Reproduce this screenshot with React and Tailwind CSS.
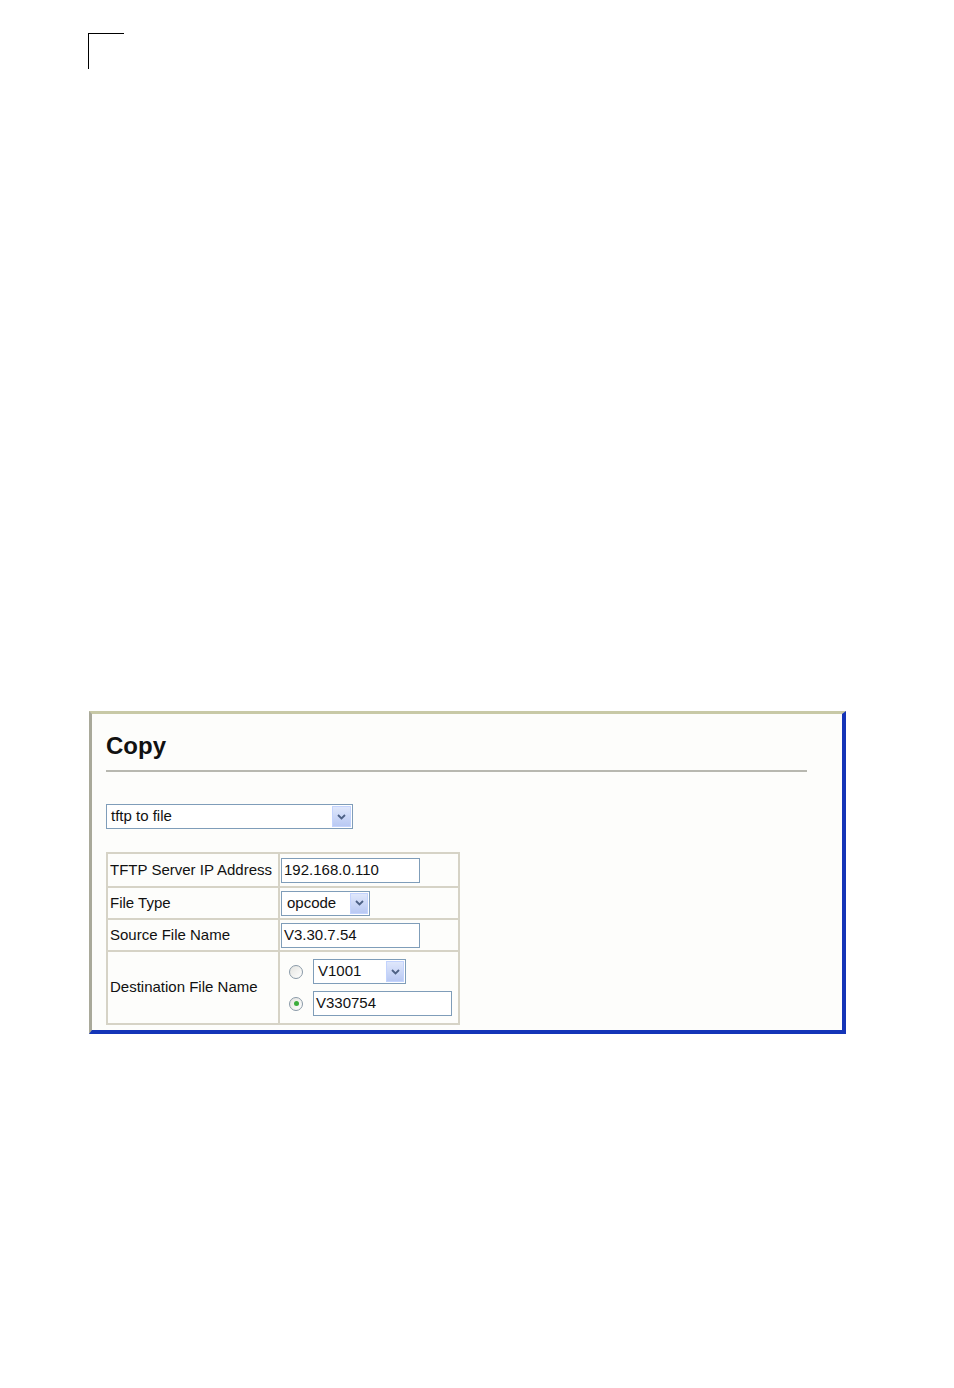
import React from "react";

function Arrow({ className = "" }) {
  return (
    <div className={"flex items-center justify-center bg-gradient-to-b from-[#dfe7fb] to-[#b9c9f3] border border-[#c3d3fd] " + className}>
      <svg width="9" height="6" viewBox="0 0 9 6">
        <path d="M1 1 L4.5 4.5 L8 1" fill="none" stroke="#4d6185" strokeWidth="1.8" />
      </svg>
    </div>
  );
}

function Select({ value, w, arrowW = "w-[18px]" }) {
  return (
    <div className={"flex items-center h-[25px] border border-[#7f9db9] bg-white pl-[4px] pr-[1px] " + w}>
      <span className="flex-1">{value}</span>
      <Arrow className={"h-[21px] " + arrowW} />
    </div>
  );
}

function Input({ value, w }) {
  return (
    <div className={"flex items-center h-[25px] border border-[#7f9db9] bg-white pl-[2px] " + w}>
      {value}
    </div>
  );
}

function Radio({ checked }) {
  return (
    <div className="w-[14px] h-[14px] rounded-full border border-[#8a9aa8] bg-gradient-to-br from-[#e4e4e0] to-white flex items-center justify-center">
      {checked && <div className="w-[5px] h-[5px] rounded-full bg-[#3cad3c]" />}
    </div>
  );
}

export default function App() {
  return (
    <div className="w-[954px] h-[1388px] bg-white overflow-hidden" style={{ fontFamily: '"Liberation Sans", Arial, sans-serif' }}>
      <div className="pt-[33px] pl-[88px]">
        <div className="w-[36px] h-[36px] border-l border-t border-black" />
      </div>
      <div className="ml-[89px] mt-[642px] w-[757px] h-[323px] bg-[#fdfdfb] border-t-[3px] border-t-[#c8c9a6] border-l-[3px] border-l-[#a9a99a] border-r-[4px] border-r-[#1534b7] border-b-[4px] border-b-[#1435b8]">
        <div className="pl-[14px] pt-[18px]">
          <div className="text-[24px] font-bold leading-[28px] text-[#111]">Copy</div>
          <div className="mt-[10px] w-[701px] h-[2px] bg-[#b8b8b0]" />
          <div className="mt-[32px] text-[15px] text-[#111]">
            <Select value="tftp to file" w="w-[247px]" arrowW="w-[19px]" />
          </div>
          <table className="mt-[23px] border-collapse text-[15px] text-[#111]">
            <tbody>
              <tr className="h-[34px]">
                <td className="border-2 border-[#d6d3c6] w-[172px] pl-[2px] whitespace-nowrap">TFTP Server IP Address</td>
                <td className="border-2 border-[#d6d3c6] w-[180px] pl-[1px]">
                  <Input value="192.168.0.110" w="w-[139px]" />
                </td>
              </tr>
              <tr className="h-[32px]">
                <td className="border-2 border-[#d6d3c6] pl-[2px]">File Type</td>
                <td className="border-2 border-[#d6d3c6] pl-[1px]">
                  <Select value="opcode" w="w-[89px] pl-[5px]" />
                </td>
              </tr>
              <tr className="h-[32px]">
                <td className="border-2 border-[#d6d3c6] pl-[2px]">Source File Name</td>
                <td className="border-2 border-[#d6d3c6] pl-[1px]">
                  <Input value="V3.30.7.54" w="w-[139px]" />
                </td>
              </tr>
              <tr className="h-[73px]">
                <td className="border-2 border-[#d6d3c6] pl-[2px]">Destination File Name</td>
                <td className="border-2 border-[#d6d3c6] pl-[9px]">
                  <div className="flex flex-col gap-[7px]">
                    <div className="flex items-center gap-[10px]">
                      <Radio />
                      <Select value="V1001" w="w-[93px]" />
                    </div>
                    <div className="flex items-center gap-[10px]">
                      <Radio checked />
                      <Input value="V330754" w="w-[139px]" />
                    </div>
                  </div>
                </td>
              </tr>
            </tbody>
          </table>
        </div>
      </div>
    </div>
  );
}
